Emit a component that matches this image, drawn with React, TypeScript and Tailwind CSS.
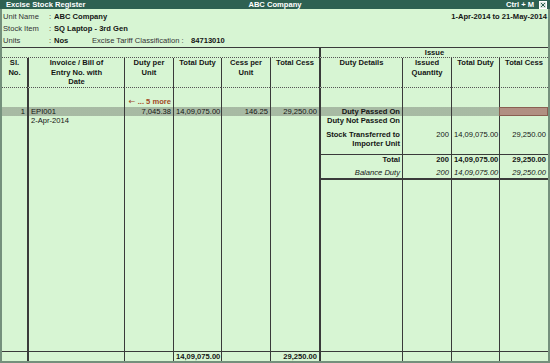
import React from "react";

const GRID = "grid grid-cols-[25px_97px_49px_48px_49px_49px_83px_49px_48px_49px]";
const EDGE = [
  "",
  "border-l-2 border-[#3a3a3a]",
  "border-l border-[#3a3a3a]",
  "border-l border-[#3a3a3a]",
  "border-l border-[#3a3a3a]",
  "border-l border-[#3a3a3a]",
  "border-l-2 border-[#3a3a3a]",
  "border-l border-[#3a3a3a]",
  "border-l border-[#3a3a3a]",
  "border-l border-[#3a3a3a]",
];

type Cell = { t?: React.ReactNode; c?: string };

function Row({ h, cells }: { h: string; cells: Cell[] }) {
  const full: Cell[] = Array.from({ length: 10 }, (_, i) => cells[i] ?? {});
  return (
    <div className={`${GRID} ${h}`}>
      {full.map((cell, i) => (
        <div key={i} className={`${EDGE[i]} px-[2px] whitespace-nowrap ${cell.c ?? ""}`}>
          {cell.t}
        </div>
      ))}
    </div>
  );
}

const HL =
  "bg-[#bcd0b8] bg-[radial-gradient(circle,#8fa08b_0.6px,transparent_0.8px)] bg-size-[2px_2px]";
const SEL =
  "bg-[#c4a79a] bg-[radial-gradient(circle,#9a7466_0.6px,transparent_0.8px)] bg-size-[2px_2px] outline outline-1 outline-[#8a5f52] -outline-offset-1";

export default function App() {
  return (
    <div className="w-[550px] h-[363px] flex flex-col bg-[#74907c] font-['Liberation_Sans',Arial,sans-serif] text-[7.6px] text-[#151515] overflow-hidden">
      {/* title bar */}
      <div className="h-[9px] bg-[#2e6152] text-white font-bold leading-[9px] grid grid-cols-[1fr_auto_1fr]">
        <div className="pl-[6px]">Excise Stock Register</div>
        <div>ABC Company</div>
        <div className="flex justify-end items-center gap-[5px] pr-[3px]">
          <span>Ctrl + M</span>
          <svg width="8" height="8" viewBox="0 0 8 8">
            <rect x="0.5" y="0.5" width="7" height="7" fill="#dbe6df" stroke="#ffffff" />
            <path d="M2 2 L6 6 M6 2 L2 6" stroke="#2e6152" strokeWidth="1" />
          </svg>
        </div>
      </div>

      {/* body */}
      <div className="flex-1 mx-[2px] mb-[2px] bg-[#d7f5d3] flex flex-col">
        {/* info */}
        <div className="h-[38px] pt-[2px] leading-[12px] px-[1px] flex justify-between">
          <div>
            <div className="flex">
              <span className="w-[46px] text-[#333]">Unit Name</span>
              <span className="w-[5px] text-[#333]">:</span>
              <span className="font-bold">ABC Company</span>
            </div>
            <div className="flex">
              <span className="w-[46px] text-[#333]">Stock Item</span>
              <span className="w-[5px] text-[#333]">:</span>
              <span className="font-bold">SQ Laptop - 3rd Gen</span>
            </div>
            <div className="flex">
              <span className="w-[46px] text-[#333]">Units</span>
              <span className="w-[5px] text-[#333]">:</span>
              <span className="font-bold w-[38px]">Nos</span>
              <span className="text-[#333] w-[99px]">Excise Tariff Classification :</span>
              <span className="font-bold">84713010</span>
            </div>
          </div>
          <div className="font-bold">1-Apr-2014 to 21-May-2014</div>
        </div>

        {/* table */}
        <div className="flex-1 flex flex-col border-t border-[#3a3a3a]">
          {/* Issue row */}
          <div className={`${GRID} h-[10px] leading-[9px] font-bold`}>
            <div className="col-span-6 [border-bottom:1px_dotted_#555]"></div>
            <div className="col-span-4 border-l-2 border-[#3a3a3a] [border-bottom:1px_dotted_#555] text-center">
              Issue
            </div>
          </div>

          {/* headers */}
          <div className={`${GRID} h-[30px] leading-[9.5px] font-bold text-center`}>
            {[
              <>Sl.<br />No.</>,
              <>Invoice / Bill of<br />Entry No. with<br />Date</>,
              <>Duty per<br />Unit</>,
              <>Total Duty</>,
              <>Cess per<br />Unit</>,
              <>Total Cess</>,
              <>Duty Details</>,
              <>Issued<br />Quantity</>,
              <>Total Duty</>,
              <>Total Cess</>,
            ].map((t, i) => (
              <div key={i} className={`${EDGE[i]} [border-bottom:1px_dotted_#555] whitespace-nowrap`}>
                {t}
              </div>
            ))}
          </div>

          {/* more row */}
          <Row
            h="h-[19px] leading-[9px]"
            cells={[
              {},
              {},
              {
                t: (
                  <>
                    <span className="font-['DejaVu_Sans',sans-serif] font-normal text-[8px]">←</span>
                    <span>&nbsp;... 5 more</span>
                  </>
                ),
                c: "flex justify-end items-end pb-[1px] font-bold text-[#a24a26]",
              },
            ]}
          />

          {/* highlighted row */}
          <Row
            h="h-[9px] leading-[9px]"
            cells={[
              { t: "1", c: `${HL} text-right` },
              { t: "EPI001", c: HL },
              { t: "7,045.38", c: `${HL} text-right` },
              { t: "14,09,075.00", c: `${HL} text-right` },
              { t: "146.25", c: `${HL} text-right` },
              { t: "29,250.00", c: `${HL} text-right` },
              { t: "Duty Passed On", c: `${HL} text-right font-bold` },
              { c: HL },
              { c: HL },
              { c: SEL },
            ]}
          />

          <Row
            h="h-[10px] leading-[10px]"
            cells={[
              {},
              { t: "2-Apr-2014" },
              {},
              {},
              {},
              {},
              { t: "Duty Not Passed On", c: "text-right font-bold" },
            ]}
          />

          <Row
            h="h-[28px] leading-[9px]"
            cells={[
              {},
              {},
              {},
              {},
              {},
              {},
              {
                t: (
                  <>
                    Stock Transferred to
                    <br />
                    Importer Unit
                  </>
                ),
                c: "text-right font-bold pt-[4px]",
              },
              { t: "200", c: "text-right pt-[4px]" },
              { t: "14,09,075.00", c: "text-right pt-[4px]" },
              { t: "29,250.00", c: "text-right pt-[4px]" },
            ]}
          />

          <Row
            h="h-[11px] leading-[10px]"
            cells={[
              {},
              {},
              {},
              {},
              {},
              {},
              { t: "Total", c: "text-right font-bold border-t" },
              { t: "200", c: "text-right font-bold border-t" },
              { t: "14,09,075.00", c: "text-right font-bold border-t" },
              { t: "29,250.00", c: "text-right font-bold border-t" },
            ]}
          />

          <Row
            h="h-[15px] leading-[9px]"
            cells={[
              {},
              {},
              {},
              {},
              {},
              {},
              { t: "Balance Duty", c: "text-right italic border-b-2 pt-[3px]" },
              { t: "200", c: "text-right italic border-b-2 pt-[3px]" },
              { t: "14,09,075.00", c: "text-right italic border-b-2 pt-[3px]" },
              { t: "29,250.00", c: "text-right italic border-b-2 pt-[3px]" },
            ]}
          />

          {/* filler */}
          <Row h="flex-1" cells={[]} />

          {/* footer */}
          <div className="border-t border-[#3a3a3a]">
            <Row
              h="h-[9px] leading-[9px]"
              cells={[
                {},
                {},
                {},
                { t: "14,09,075.00", c: "text-right font-bold" },
                {},
                { t: "29,250.00", c: "text-right font-bold" },
              ]}
            />
          </div>
        </div>
      </div>
    </div>
  );
}
